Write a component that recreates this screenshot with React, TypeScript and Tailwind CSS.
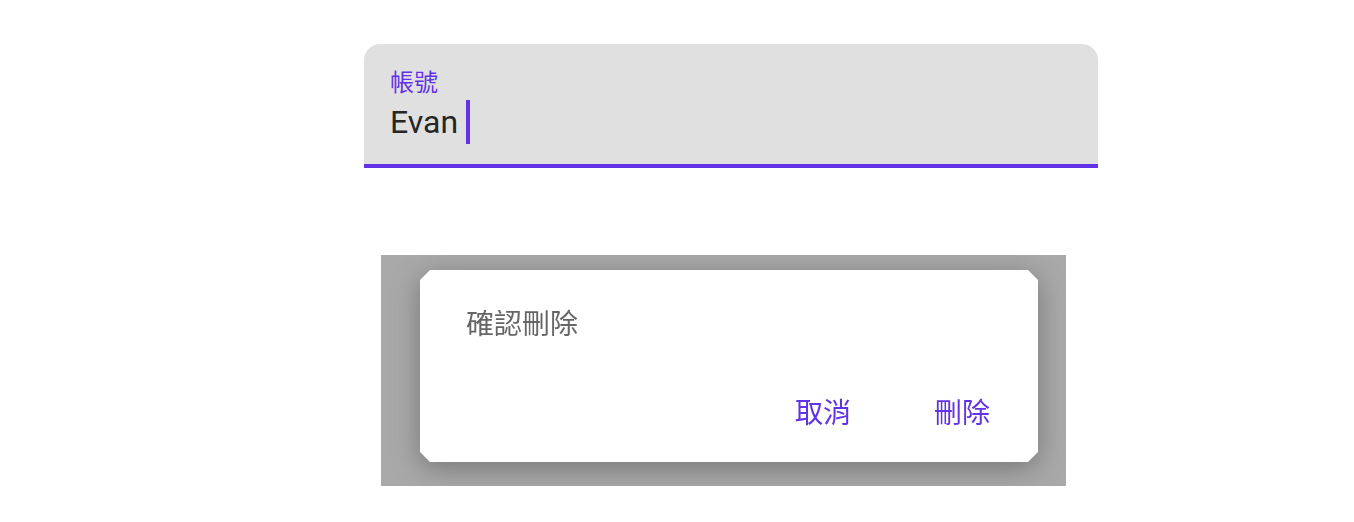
export default function App() {
  return (
    <main className="min-h-screen bg-white pl-[364px] pt-[44px] font-['Roboto','Noto_Sans_CJK_TC',sans-serif]">
      <section className="flex h-[124px] w-[734px] flex-col rounded-t-[16px] border-b-4 border-[#6232e6] bg-[#e0e0e0] pl-[26px] pt-[24px]">
        <label className="text-[24px] leading-[30px] text-[#6232e6]">帳號</label>
        <div className="mt-[2px] flex items-center">
          <span className="text-[32px] leading-[44px] text-[#262626]">Evan</span>
          <span className="ml-[8px] h-[44px] w-[4px] bg-[#6232e6]" />
        </div>
      </section>

      <section className="ml-[17px] mt-[87px] h-[231px] w-[685px] overflow-hidden bg-[#a9a9a9] pl-[39px] pt-[15px]">
        <div className="w-[618px] drop-shadow-[0_6px_14px_rgba(0,0,0,0.3)]">
          <div className="flex h-[192px] flex-col bg-white pl-[46px] pr-[48px] pt-[37px] [clip-path:polygon(10px_0,calc(100%-10px)_0,100%_10px,100%_calc(100%-10px),calc(100%-10px)_100%,10px_100%,0_calc(100%-10px),0_10px)]">
            <h2 className="text-[28px] leading-[36px] text-[#666666]">確認刪除</h2>
            <div className="mt-[53px] flex justify-end gap-[83px]">
              <button className="text-[28px] leading-[36px] text-[#6232e6]">取消</button>
              <button className="text-[28px] leading-[36px] text-[#6232e6]">刪除</button>
            </div>
          </div>
        </div>
      </section>
    </main>
  );
}
